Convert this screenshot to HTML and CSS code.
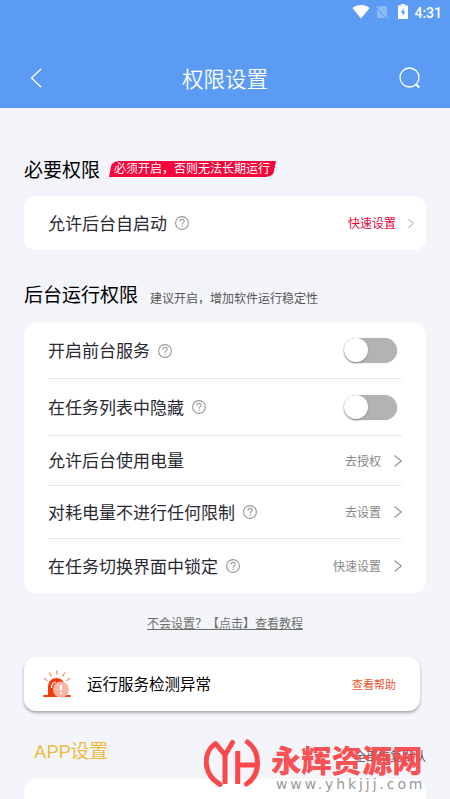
FILE: index.html
```html
<!DOCTYPE html>
<html lang="zh-CN">
<head>
<meta charset="utf-8">
<title>权限设置</title>
<link rel="stylesheet" href="styles.css">
</head>
<body>
<svg width="0" height="0" class="defs">
  <symbol id="help" viewBox="0 0 14 14"><circle cx="7" cy="7" r="6.4"/><path d="M4.9 5.4C4.9 2.5 9.2 2.6 9.2 5.2C9.2 6.7 7.1 6.6 7.1 8.7M7.1 9.8V11"/></symbol>
  <symbol id="chevron" viewBox="0 0 8 12"><path d="M.5 .5L7.3 6L.5 11.5"/></symbol>
</svg>
<div class="screen">
  <header class="header">
    <div class="status">
      <svg class="wifi" viewBox="0 0 18 14"><path d="M.4 3.4C5-.6 13-.6 17.6 3.4L9 14Z" fill="#fff"/></svg>
      <svg class="sim" viewBox="0 0 13 14"><path d="M4 1H11V11.5L2 2.8ZM1 4L10 13H1Z" fill="#fff" opacity=".3"/><path d="M.5 1L12.5 13.5" stroke="#fff" opacity=".45"/></svg>
      <svg class="battery" viewBox="0 0 10 15"><path d="M3 0H7V1.5H10V15H0V1.5H3Z" fill="#fff"/><path d="M5.6 4L2.8 8.7H4.7V12L7.4 7.4H5.6Z" fill="#5b9bf3"/></svg>
      <span class="time">4:31</span>
    </div>
    <div class="nav">
      <svg class="back" viewBox="0 0 12 20"><path d="M11 1L1.5 10L11 19"/></svg>
      <h1>权限设置</h1>
      <svg class="search" viewBox="0 0 22 22"><circle cx="10.5" cy="10.5" r="9.5"/><path d="M16.5 17L20.3 20.5" stroke-width="2"/></svg>
    </div>
  </header>
  <main>
    <div class="heading first"><h2>必要权限</h2><span class="tag">必须开启，否则无法长期运行</span></div>
    <section class="card single">
      <div class="row"><span class="label">允许后台自启动</span><svg class="help"><use href="#help"/></svg><span class="action red">快速设置</span><svg class="arrow small" viewBox="0 0 8 12"><use href="#chevron" width="8" height="12"/></svg></div>
    </section>
    <div class="heading second"><h2>后台运行权限</h2><span class="hint">建议开启，增加软件运行稳定性</span></div>
    <section class="card list">
      <div class="row r1"><span class="label">开启前台服务</span><svg class="help"><use href="#help"/></svg><i class="switch"></i></div>
      <div class="row r2"><span class="label">在任务列表中隐藏</span><svg class="help"><use href="#help"/></svg><i class="switch"></i></div>
      <div class="row r3"><span class="label">允许后台使用电量</span><span class="action">去授权</span><svg class="arrow"><use href="#chevron"/></svg></div>
      <div class="row r4"><span class="label">对耗电量不进行任何限制</span><svg class="help"><use href="#help"/></svg><span class="action">去设置</span><svg class="arrow"><use href="#chevron"/></svg></div>
      <div class="row r5"><span class="label">在任务切换界面中锁定</span><svg class="help"><use href="#help"/></svg><span class="action">快速设置</span><svg class="arrow"><use href="#chevron"/></svg></div>
    </section>
    <a class="tutorial">不会设置？【点击】查看教程</a>
    <section class="notice">
      <svg class="alarm" viewBox="0 0 28 28"><path d="M5 25V17C5 5 22 5 22 17V25Z" fill="#f43b0d"/><path d="M1 26H27" stroke="#f43b0d" stroke-width="2" stroke-linecap="round"/><path d="M8.5 18C8.5 14 10 12.5 13 12" fill="none" stroke="#fff" stroke-width="1.2"/><g stroke="#f7987f" stroke-width="1.5" stroke-linecap="round"><path d="M14 1V4M6.5 3L8 6M21.5 3L20 6M1.5 8.5L4 10.5M26.5 8.5L24 10.5"/></g><circle cx="18" cy="19.5" r="8" fill="#fbb5a4"/><path d="M18 15V20.5M18 22.8V24" stroke="#fff" stroke-width="2"/></svg>
      <strong>运行服务检测异常</strong><span>查看帮助</span>
    </section>
    <div class="app-heading"><h2>APP设置</h2><span>全部恢复默认</span></div>
    <section class="card next"></section>
  </main>
  <div class="watermark">
    <svg class="logo" viewBox="0 0 56 50"><g fill="none" stroke="#fa484b" stroke-width="5" stroke-linejoin="round"><path stroke-linecap="round" d="M28.5 3.5L21 16L11.5 4.5C-1 13-2 35 16 45.5"/><path d="M21 15V45M33.7 12V45M33.7 26H52"/><path stroke-linecap="round" d="M43.5 3C57 13 57 36 42.5 45"/></g></svg>
    <div class="brand"><b>永辉资源网</b><span>www.yhkjjj.com</span></div>
  </div>
</div>
</body>
</html>
```
FILE: styles.css
```css
* { box-sizing: border-box; }
body { margin: 0; font-family: Roboto, "Noto Sans CJK SC", sans-serif; }
.defs { position: absolute; }
svg { display: block; flex: none; }
h1, h2 { margin: 0; font-weight: 400; white-space: nowrap; }
.screen { width: 450px; height: 799px; overflow: hidden; position: relative; background: #f4f5fa; }
.header { height: 108px; background: #5b9bf3; color: #fff; }
.status { height: 48px; padding: 4px 8px 0 0; display: flex; justify-content: flex-end; align-items: flex-start; }
.wifi { width: 18px; height: 15px; }
.sim { width: 13px; height: 14px; margin: 1px 9px 0 6px; }
.battery { width: 10px; height: 15px; margin-right: 6px; }
.time { font: 500 14px/18px Roboto, sans-serif; }
.nav { height: 60px; display: flex; align-items: center; padding: 0 29px 0 30px; justify-content: space-between; }
h1 { font-size: 21.5px; font-weight: 350; line-height: 30px; padding: 3px 0 0 9px; }
.back, .search { fill: none; stroke: #fff; stroke-width: 1.3; }
.back { width: 12px; height: 20px; }
.search { width: 22px; height: 22px; }
main { padding: 0 24px; }
.heading { display: flex; align-items: center; }
.heading h2 { font-size: 19px; line-height: 28px; color: #000; }
.first { padding-top: 49px; height: 88px; align-items: flex-start; }
.tag { margin: 4px 0 0 9px; height: 16px; width: 167px; padding-left: 5px; background: #f8043c; color: #fff; font-size: 12px; line-height: 17px; border-radius: 10px 0 10px 0; clip-path: polygon(3px 0, 100% 0, 98% 100%, 0 100%); white-space: nowrap; }
.card { background: #fff; border-radius: 12px; padding: 0 24px; }
.row { display: flex; align-items: center; font-size: 17px; color: #292932; white-space: nowrap; }
.label { padding-bottom: 2px; }
.single { height: 54px; padding-right: 12px; }
.single .row { height: 54px; }
.help { width: 14px; height: 14px; margin-left: 8px; fill: none; stroke: #999; stroke-width: 1.1; }
.action { margin-left: auto; font-size: 12px; color: #888; padding-bottom: 1px; }
.red { color: #e2083f; }
.arrow { width: 8px; height: 12px; margin-left: 13px; fill: none; stroke: #999; stroke-width: 1.2; }
.small { width: 6px; height: 9px; margin-left: 12px; }
.second { height: 73px; padding-top: 18px; }
.hint { font-size: 12px; color: #555; margin: 3px 0 0 12px; }
.list { height: 270px; }
.list .row { border-bottom: 1px solid #e9e9e9; }
.list .r1 { height: 56px; }
.list .r2 { height: 57px; }
.list .r3 { height: 50px; }
.list .r4 { height: 53px; }
.list .r5 { height: 54px; border: 0; }
.switch { margin: 0 5px 0 auto; width: 53px; height: 25px; border-radius: 13px; background: #b3b3b3; box-shadow: 0 0 1px #bbb; }
.switch::before { content: ""; display: block; width: 24px; height: 24px; border-radius: 50%; background: #fff; box-shadow: 0 1px 2px #888; }
.tutorial { display: block; width: max-content; margin: 22px auto 0; font-size: 12px; line-height: 19px; color: #6c706b; text-decoration: underline; }
.notice { margin-top: 23px; width: 396px; height: 54px; background: #fff; border-radius: 12px; box-shadow: 0 2px 3px #aaa; display: flex; align-items: center; padding: 0 24px 0 19px; }
.alarm { width: 28px; height: 28px; }
.notice strong { margin-left: 16px; font-weight: 400; font-size: 15.5px; color: #000; padding-bottom: 2px; }
.notice > span { margin-left: auto; font-size: 11px; color: #ee542b; }
.app-heading { height: 68px; padding: 14px 0 0 10px; display: flex; align-items: center; justify-content: space-between; }
.app-heading h2 { font-size: 19px; line-height: 28px; color: #edba43; }
.app-heading span { font-size: 12px; color: #555; margin-top: 6px; }
.next { height: 40px; }
.watermark { position: absolute; left: 204px; top: 739px; display: flex; white-space: nowrap; }
.logo { width: 56px; height: 50px; }
.brand { margin-left: 11px; width: 158px; padding-top: 3px; }
.brand b { display: block; font: 900 30.3px/34px "Noto Sans CJK SC", sans-serif; color: #fa484b; opacity: .94; }
.brand span { display: block; font: 14px/16px "DejaVu Sans", sans-serif; letter-spacing: 2.9px; color: #999; padding-left: 5px; }
```
